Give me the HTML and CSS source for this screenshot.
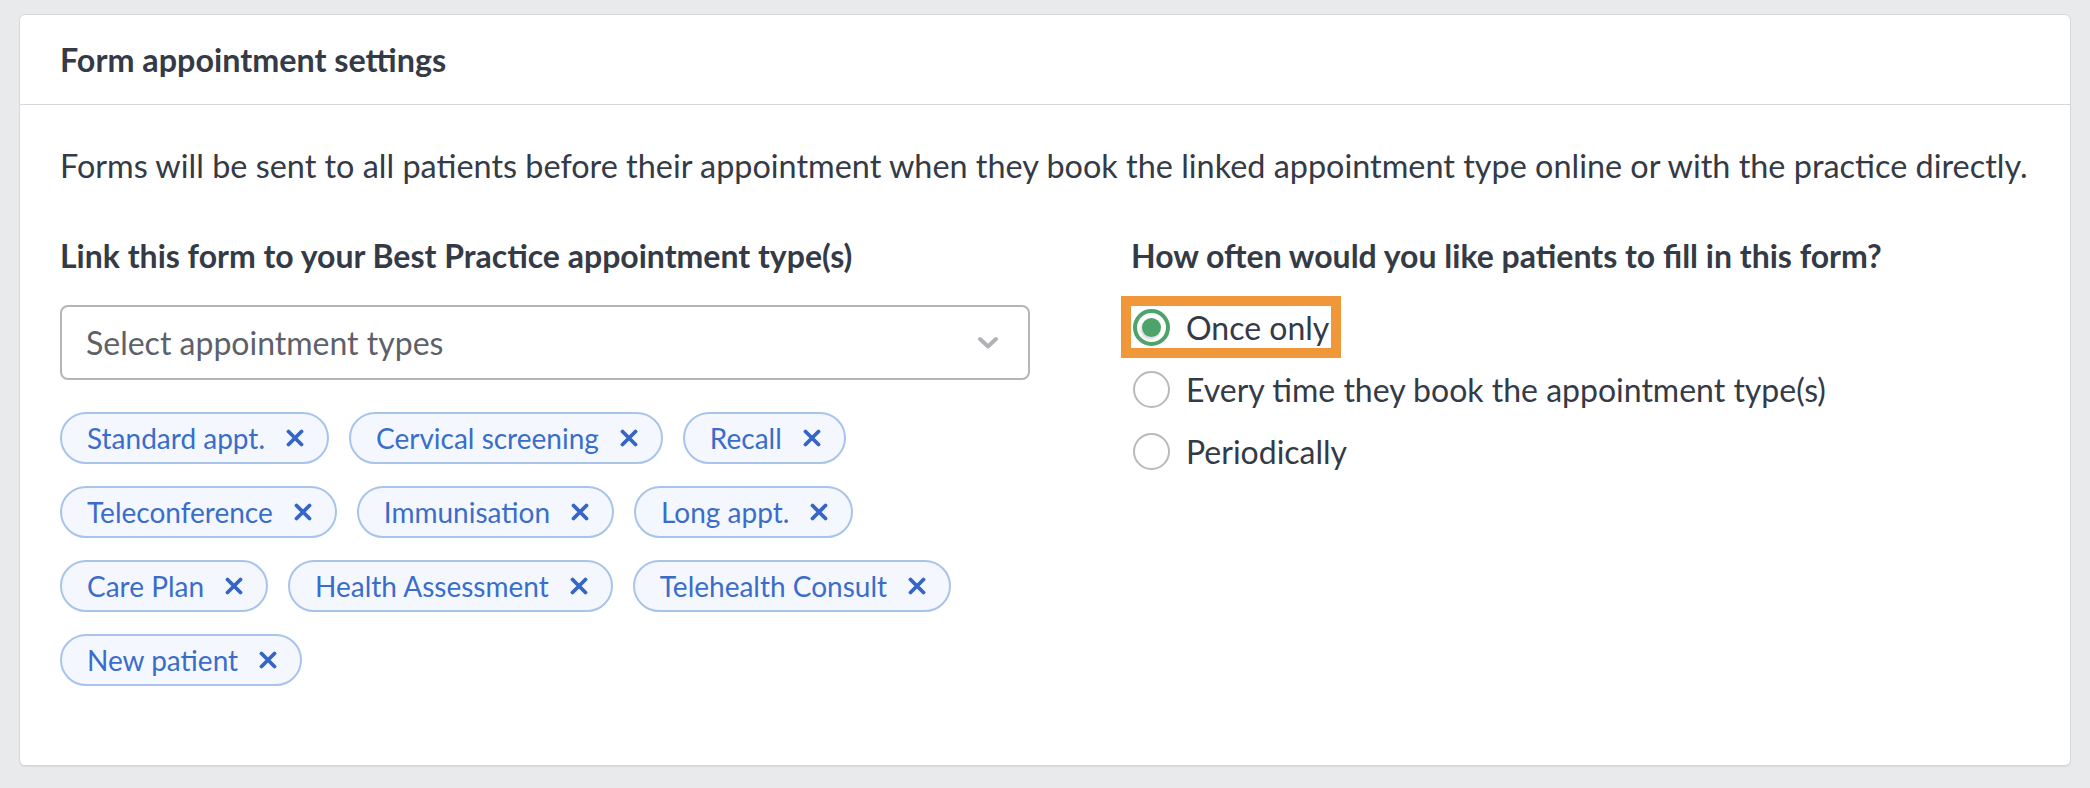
FILE: index.html
```html
<!DOCTYPE html>
<html lang="en">
<head>
<meta charset="utf-8">
<title>Form appointment settings</title>
<link rel="stylesheet" href="styles.css">
</head>
<body>
<div class="card">
    <div class="card-head">Form appointment settings</div>
    <div class="card-body">
        <p class="intro">Forms will be sent to all patients before their appointment when they book the linked appointment type online or with the practice directly.</p>
        <div class="cols">
            <div class="col">
                <h3 class="label">Link this form to your Best Practice appointment type(s)</h3>
                <div class="select">
                    <span class="placeholder">Select appointment types</span>
                    <svg class="chevron" width="22" height="14" viewBox="0 0 22 14"><polyline points="3,3 11,10.5 19,3" fill="none" stroke="currentColor" stroke-width="4" stroke-linecap="round" stroke-linejoin="round"/></svg>
                </div>
                <ul class="tags">
                    <li>Standard appt.<svg class="x" width="18" height="18" viewBox="0 0 18 18"><path d="M2.5 2.5L15.5 15.5M15.5 2.5L2.5 15.5"/></svg></li>
                    <li>Cervical screening<svg class="x" width="18" height="18" viewBox="0 0 18 18"><path d="M2.5 2.5L15.5 15.5M15.5 2.5L2.5 15.5"/></svg></li>
                    <li>Recall<svg class="x" width="18" height="18" viewBox="0 0 18 18"><path d="M2.5 2.5L15.5 15.5M15.5 2.5L2.5 15.5"/></svg></li>
                    <li>Teleconference<svg class="x" width="18" height="18" viewBox="0 0 18 18"><path d="M2.5 2.5L15.5 15.5M15.5 2.5L2.5 15.5"/></svg></li>
                    <li>Immunisation<svg class="x" width="18" height="18" viewBox="0 0 18 18"><path d="M2.5 2.5L15.5 15.5M15.5 2.5L2.5 15.5"/></svg></li>
                    <li>Long appt.<svg class="x" width="18" height="18" viewBox="0 0 18 18"><path d="M2.5 2.5L15.5 15.5M15.5 2.5L2.5 15.5"/></svg></li>
                    <li>Care Plan<svg class="x" width="18" height="18" viewBox="0 0 18 18"><path d="M2.5 2.5L15.5 15.5M15.5 2.5L2.5 15.5"/></svg></li>
                    <li>Health Assessment<svg class="x" width="18" height="18" viewBox="0 0 18 18"><path d="M2.5 2.5L15.5 15.5M15.5 2.5L2.5 15.5"/></svg></li>
                    <li>Telehealth Consult<svg class="x" width="18" height="18" viewBox="0 0 18 18"><path d="M2.5 2.5L15.5 15.5M15.5 2.5L2.5 15.5"/></svg></li>
                    <li>New patient<svg class="x" width="18" height="18" viewBox="0 0 18 18"><path d="M2.5 2.5L15.5 15.5M15.5 2.5L2.5 15.5"/></svg></li>
                </ul>
            </div>
            <div class="col">
                <h3 class="label">How often would you like patients to fill in this form?</h3>
                <div class="options">
                    <label class="option highlight"><span class="radio checked"></span>Once only</label>
                    <label class="option"><span class="radio"></span>Every time they book the appointment type(s)</label>
                    <label class="option"><span class="radio"></span>Periodically</label>
                </div>
            </div>
        </div>
    </div>
</div>
</body>
</html>
```

FILE: styles.css
```css
body,div,p,h3,ul,li{margin:0;padding:0;}
ul{list-style-type:none;}
body{background:#e9eaec;padding:14px 19px 20px;font-family:Lato,"Noto Sans",Arial,sans-serif;color:#343a46;}

.card{background:#fff;border:1px solid #d6d8db;border-radius:6px;box-shadow:0 1px 0 #d6d8db;height:752px;box-sizing:border-box;}
.card-head{height:89px;display:flex;align-items:center;padding:0 40px;font-size:32.3px;font-weight:700;border-bottom:1px solid #d6d8db;}
.card-body{padding:41px 40px 0;}
.intro{font-size:32.4px;line-height:40px;}

.cols{display:grid;grid-template-columns:970px 1fr;column-gap:101px;margin-top:52px;}
.label{font-size:32px;line-height:36px;font-weight:700;}

.select{margin-top:31px;height:75px;box-sizing:border-box;border:2px solid #b4b4b9;border-radius:8px;display:flex;align-items:center;justify-content:space-between;padding:0 29px 0 24px;}
.placeholder{font-size:32px;color:#5d6169;}
.chevron{color:#b1b1b6;display:block;}

.tags{display:flex;flex-wrap:wrap;gap:22px 20px;margin-top:32px;}
.tags li{display:flex;align-items:center;gap:21px;height:52px;box-sizing:border-box;padding:0 23px 0 25px;border:2px solid #a9c4ea;border-radius:26px;background:#f4f8fe;color:#3a6dcb;font-size:28px;}
.tags .x{display:block;stroke:#3565c6;stroke-width:3.8;stroke-linecap:round;}

.options{margin-top:32px;display:flex;flex-direction:column;align-items:flex-start;gap:20px;}
.option{display:flex;align-items:center;gap:16px;height:42px;padding:0 2px;font-size:32px;}
.option.highlight{outline:10px solid #f0973a;}
.radio{width:37px;height:37px;box-sizing:border-box;border:2px solid #b9b9be;border-radius:50%;display:flex;align-items:center;justify-content:center;}
.radio.checked{border:4px solid #4ea36b;}
.radio.checked:after{content:"";width:19px;height:19px;border-radius:50%;background:#4ea36b;box-shadow:-1px 2px 3px rgba(0,0,0,.18);}
```
